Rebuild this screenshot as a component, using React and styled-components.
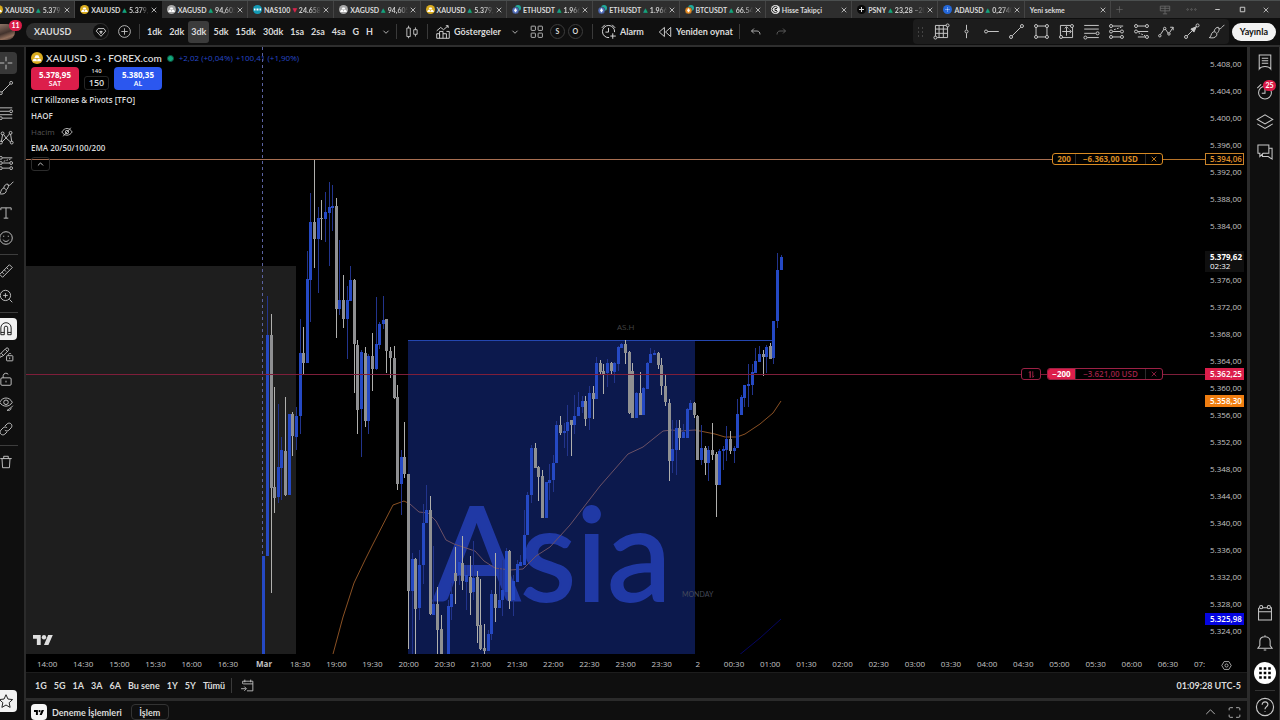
import React from "react";
import styled, { createGlobalStyle, css } from "styled-components";

const GlobalStyle = createGlobalStyle`
    * {
        box-sizing: border-box;
    }
    body {
        margin: 0;
        background: #0f0f0f;
        color: #dbdbdb;
        font-family: Lato, "Open Sans", sans-serif;
        font-size: 9px;
        overflow: hidden;
    }
    button, input {
        font: inherit;
        color: inherit;
        background: none;
        border: none;
        padding: 0;
    }
    svg {
        display: block;
        flex: none;
    }
`

const chartFont = `"Open Sans", "Noto Sans", sans-serif`

const Page = styled.div`
    height: 100vh;
    display: flex;
    flex-direction: column;
    overflow: hidden;
`

const Spacer = styled.div`
    flex: 1;
`

const TabBar = styled.header`
    display: flex;
    height: 18px;
    background: #2e2e2e;
    border-top: 1px solid #4b4f4f;
`

const TabList = styled.nav`
    flex: 1;
    display: flex;
    min-width: 0;
    margin-left: -11px;
`

const Tab = styled.div`
    flex: 1;
    min-width: 0;
    display: flex;
    align-items: center;
    gap: 1px;
    padding: 0 3px 0 5px;
    border-right: 1px solid ${props => props.$active ? "#0f0f0f" : "#444"};
    background: ${props => props.$active ? "#0f0f0f" : "transparent"};
`

const TabLink = styled.a`
    display: flex;
    align-items: center;
    gap: 2px;
    flex: 1;
    min-width: 0;
    white-space: nowrap;
    color: #dbdbdb;
    text-decoration: none;
    font-size: 7px;
    line-height: 12px;
    font-weight: 700;
`

const TabPrice = styled.span`
    font-weight: 700;
    flex: 1;
    min-width: 0;
    overflow: hidden;
    color: #d0d0d0;
    mask-image: linear-gradient(90deg, #000 50%, transparent);
`

const Arrow = styled.span`
    color: ${props => props.$down ? "#d6244f" : "#14a37f"};
    font-size: 6px;
    font-family: "DejaVu Sans", sans-serif;
`

const IconButton = styled.button`
    display: flex;
    align-items: center;
    justify-content: center;
    color: ${props => props.$dim ? "#6a6a6a" : "#c9c9c9"};
`

const WindowControls = styled.div`
    width: 169px;
    display: flex;
    align-items: center;
    justify-content: space-between;
    padding: 0 3px 0 4px;
`

const Toolbar = styled.div`
    display: flex;
    align-items: center;
    height: 29px;
    background: #0f0f0f;
    border-bottom: 2px solid #2e2e2e;
    font-weight: 700;
    padding-right: 4px;
`

const Avatar = styled.div`
    position: relative;
    width: 15px;
    height: 16px;
    margin-right: 11px;
    border-radius: 0 8px 8px 0;
    background: linear-gradient(160deg, #8f7467, #43332d 50%, #94705d 75%, #2a2220);
`

const Count = styled.span`
    position: absolute;
    top: -4px;
    right: -7px;
    min-width: 13px;
    height: 11px;
    border-radius: 6px;
    background: #d91c48;
    color: #fff;
    font-size: 7px;
    line-height: 11px;
    font-weight: 700;
    text-align: center;
`

const SymbolSearch = styled.button`
    width: 83px;
    height: 17px;
    padding: 0 1px 0 8px;
    display: flex;
    align-items: center;
    justify-content: space-between;
    border-radius: 9px;
    background: #2e2e2e;
`

const SymbolBadge = styled.span`
    width: 15px;
    height: 15px;
    border-radius: 8px;
    background: #0f0f0f;
    display: flex;
    align-items: center;
    justify-content: center;
`

const Tool = styled(IconButton)`
    width: ${props => props.$w || 30}px;
    height: 22px;
`

const TextTool = styled.button`
    display: flex;
    align-items: center;
    gap: 3px;
    height: 22px;
    padding: 0 6px 0 7px;
    white-space: nowrap;
`

const Intervals = styled.div`
    display: flex;
    gap: 1px;
    padding-left: 4px;
`

const Interval = styled.button`
    height: 22px;
    padding: 0 3px;
    border-radius: 3px;
    background: ${props => props.$active ? "#3b3b3b" : "transparent"};
`

const Divider = styled.i`
    width: 1px;
    height: 15px;
    background: #3a3a3a;
`

const Letters = styled.div`
    display: flex;
    gap: 3px;
    padding: 0 9px 0 0;
`

const RoundLetter = styled.button`
    width: 15px;
    height: 15px;
    border: 1px solid #3d3d3d;
    border-radius: 8px;
    font-size: 7px;
    line-height: 13px;
`

const DrawBar = styled.div`
    margin-left: auto;
    display: flex;
    align-items: center;
    height: 25px;
    border-radius: 4px;
    background: #1c1c1c;
`

const Publish = styled.button`
    height: 18px;
    padding: 0 8px;
    margin-left: 3px;
    border-radius: 9px;
    background: #f2f2f2;
    color: #0f0f0f;
`

const Body = styled.div`
    flex: 1;
    display: flex;
    min-height: 0;
`

const LeftBar = styled.aside`
    width: 26px;
    overflow: hidden;
    display: flex;
    flex-direction: column;
    padding: 3px 0 7px;
    border-right: 2px solid #2b2b2b;
`

const SideTool = styled(IconButton)`
    width: 28px;
    height: 25px;
    margin-left: -8px;
    flex: none;

    span {
        width: 22px;
        height: 22px;
        border-radius: 4px;
        display: flex;
        align-items: center;
        justify-content: center;
        ${props => props.$active && css`background: #383838;`}
        ${props => props.$light && css`background: #f2f2f2; color: #111;`}
    }
`

const SideRule = styled.hr`
    width: 18px;
    height: 1px;
    flex: none;
    margin: 4px 0 3px;
    border: none;
    background: #3d3d3d;
`

const Main = styled.main`
    flex: 1;
    min-width: 0;
    display: flex;
    flex-direction: column;
`

const ChartRow = styled.section`
    flex: 1;
    min-height: 0;
    display: flex;
    background: #000;
    font-family: ${chartFont};
`

const ChartPane = styled.div`
    position: relative;
    flex: 1;
    min-width: 0;
    overflow: hidden;

    > svg {
        width: 100%;
        height: 100%;
    }
`

const Legend = styled.div`
    position: absolute;
    top: 5px;
    left: 5px;
    display: flex;
    flex-direction: column;
    align-items: flex-start;
    font-size: 8px;
    line-height: 16px;
    font-weight: 600;
`

const LegendTitle = styled.div`
    display: flex;
    align-items: center;
    gap: 3px;
    height: 12px;
    font-family: Lato, sans-serif;
    font-size: 10px;
    font-weight: 600;
    white-space: nowrap;
`

const Change = styled.span`
    color: #2748c8;
    font-family: ${chartFont};
    font-size: 8px;
    font-weight: 400;
`

const Dot = styled.i`
    width: 7px;
    height: 7px;
    margin: 0 2px 0 2px;
    border-radius: 4px;
    background: #12a87c;
    border: 1px solid #0b5541;
`

const TradeRow = styled.div`
    display: flex;
    align-items: flex-end;
    gap: 5px;
    margin: 3px 0 2px;
`

const TradeButton = styled.button`
    width: 48px;
    height: 23px;
    border-radius: 4px;
    background: ${props => props.$color};
    color: #fff;
    font-size: 8px;
    line-height: 9px;
    font-weight: 700;

    small {
        display: block;
        font-size: 7px;
        font-weight: 600;
    }
`

const Spread = styled.div`
    width: 25px;
    text-align: center;
    font-size: 6px;
    line-height: 9px;
`

const Quantity = styled.button`
    width: 25px;
    height: 14px;
    display: block;
    border: 1px solid #262626;
    border-radius: 3px;
    font-size: 9px;
    line-height: 12px;
`

const Hidden = styled.span`
    display: flex;
    align-items: center;
    gap: 6px;
    color: #555;
    font-weight: 400;

    svg {
        color: #c9c9c9;
    }
`

const Collapse = styled(IconButton)`
    width: 19px;
    height: 14px;
    margin-top: 1px;
    border: 1px solid #2c2c2c;
    border-radius: 3px;
`

const Order = styled.div`
    position: absolute;
    right: 42px;
    top: ${props => props.$top}px;
    height: 12px;
    display: flex;
    color: ${props => props.$color};
    font-size: 8px;
    line-height: 10px;
    white-space: nowrap;
`

const Chip = styled.div`
    display: flex;
    background: #000;
    border: 1px solid currentColor;
    border-radius: 3px;
    overflow: hidden;
    margin-left: 6px;
`

const ChipPart = styled.span`
    width: ${props => props.$w}px;
    text-align: center;
    font-weight: ${props => props.$bold ? 700 : 600};
    border-right: 1px solid #2b2b2b;
    ${props => props.$fill && css`background: ${props.$fill}; color: #fff;`}
`

const ChipButton = styled(IconButton)`
    width: ${props => props.$w || 16}px;
    color: inherit;
`

const PriceAxis = styled.div`
    position: relative;
    width: 42px;
    padding-top: 3px;
    overflow: hidden;
    font-size: 8px;
    color: #c4c4c4;
`

const PriceTick = styled.div`
    height: 27px;
    padding-left: 5px;
    line-height: 27px;
`

const PriceTag = styled.div`
    position: absolute;
    left: 0;
    top: ${props => props.$top}px;
    width: 39px;
    padding: ${props => props.$border ? "0 0 0 4px" : "1px 0 2px 5px"};
    line-height: ${props => props.$border ? 10 : 9}px;
    background: ${props => props.$bg};
    color: ${props => props.$color || "#fff"};
    border: ${props => props.$border ? `1px solid ${props.$border}` : "none"};
    font-weight: ${props => props.$bold ? 700 : 600};

    small {
        display: block;
        font-size: 8px;
        font-weight: 400;
    }
`

const TimeAxis = styled.div`
    display: flex;
    height: 18px;
    background: #000;
    font-family: ${chartFont};
    font-size: 8px;
    line-height: 19px;
    color: #c4c4c4;
`

const TimeClip = styled.div`
    flex: 1;
    min-width: 0;
    overflow: hidden;
`

const TimeLabels = styled.div`
    display: flex;
    margin: 0 -17px 0 3px;
`

const TimeLabel = styled.span`
    flex: 1;
    min-width: 0;
    text-align: center;
    font-weight: ${props => props.$bold ? 700 : 400};
`

const RangeBar = styled.div`
    display: flex;
    align-items: center;
    height: 26px;
    padding: 0 6px;
    background: #0f0f0f;
    border-top: 1px solid #1d1d1d;
    font-weight: 700;
`

const Ranges = styled.div`
    display: flex;
    gap: 1px;
    padding-right: 3px;
`

const Range = styled.button`
    padding: 0 3px;
    height: 18px;
`

const Clock = styled.button`
    margin-left: auto;
`

const BottomPanel = styled.footer`
    display: flex;
    align-items: center;
    height: 22px;
    padding: 3px 5px 0;
    background: #0f0f0f;
    border-top: 3px solid #2b2b2b;
    font-weight: 700;
`

const BrokerIcon = styled.span`
    width: 16px;
    height: 16px;
    margin-right: 5px;
    border-radius: 4px;
    background: #f5f5f5;
    color: #000;
    display: flex;
    align-items: center;
    justify-content: center;
`

const PanelTab = styled.button`
    height: 16px;
    ${props => props.$boxed && css`
        width: 38px;
        margin-left: 9px;
        border: 1px solid #333;
        border-radius: 4px;
    `}
`

const PanelActions = styled.div`
    margin-left: auto;
    display: flex;
    gap: 9px;
`

const RightBar = styled.aside`
    width: 33px;
    display: flex;
    flex-direction: column;
    align-items: center;
    border-left: 3px solid #2b2b2b;
    border-right: 1px solid #333;

    hr {
        width: 20px;
        margin: 2px 0 3px;
        border: none;
        border-top: 1px solid #333;
    }
`

const RightTool = styled(IconButton)`
    position: relative;
    width: 29px;
    height: ${props => props.$h || 30}px;
    flex: none;

    ${Count} {
        top: 3px;
        right: 3px;
    }
`

const AppsButton = styled.span`
    width: 22px;
    height: 22px;
    border-radius: 11px;
    background: #fff;
    color: #000;
    display: flex;
    align-items: center;
    justify-content: center;
`

// All line icons are drawn on a 28 unit grid
const icons = {
    cross: <path d="M14 3v8M14 17v8M3 14h8M17 14h8" />,
    trend: <><path d="M7 21 21 7" /><circle cx="5" cy="23" r="2.5" /><circle cx="23" cy="5" r="2.5" /></>,
    fib: <><path d="M3 5h22M3 11h17M3 17h22M8 23h17" /><circle cx="23" cy="11" r="2.5" /><circle cx="5" cy="23" r="2.5" /></>,
    pattern: <><path d="M6 20 8 8M10 8l4 6 6-7M22 7l2 13M22 21l-8-7-7 7" /><circle cx="8" cy="6" r="2.5" /><circle cx="22" cy="5" r="2.5" /><circle cx="5" cy="22" r="2.5" /><circle cx="24" cy="22" r="2.5" /></>,
    position: <><path d="M8 5h17M8 14h12M8 23h12" /><path d="m10 11 12-4" strokeDasharray="3 2" /><circle cx="5" cy="5" r="2.5" /><circle cx="5" cy="14" r="2.5" /><circle cx="23" cy="14" r="2.5" /><circle cx="5" cy="23" r="2.5" /><circle cx="23" cy="23" r="2.5" /></>,
    shortPosition: <><path d="M8 5h12M8 14h17M8 23h12" /><path d="m9 16 11 5" strokeDasharray="3 2" /><circle cx="5" cy="5" r="2.5" /><circle cx="23" cy="5" r="2.5" /><circle cx="5" cy="14" r="2.5" /><circle cx="23" cy="23" r="2.5" /></>,
    brush: <><path d="M2 24c4-1 2-6 6-9 4-2 8 2 6 6-2 4-8 4-12 3z" /><path d="M10 14c1-5 4-7 7-7 2 2 2 6-2 10M17 8c2 4 5 0 10-5" /></>,
    text: <path d="M5 9V5h18v4M14 5v18M10 23h8" />,
    smile: <><circle cx="14" cy="14" r="11" /><path d="M9 17c2 4 8 4 10 0M10 10v2M18 10v2" /></>,
    ruler: <path d="m3 20 17-17 5 5L8 25zM7 16l3 3M11 12l3 3M15 8l3 3" />,
    zoom: <><circle cx="13" cy="13" r="9" /><path d="m20 20 5 5M9 13h8M13 9v8" /></>,
    magnet: <><path d="M5 24V12a9 9 0 0 1 18 0v12h-6V12a3 3 0 0 0-6 0v12z" /><path d="M5 20h6M17 20h6" /></>,
    pencilLock: <><path d="m3 15 11-11c3-2 6 1 4 4L9 17l-6 3zM6 13l4 4M13 6l4 4" /><rect x="15" y="17" width="11" height="9" rx="1" /><path d="M18 17v-2a3 3 0 0 1 5-1M20.500 20v3" /></>,
    lock: <><rect x="5" y="12" width="18" height="13" rx="2" /><path d="M9 12V8a5 5 0 0 1 9-2M14 17v3" /></>,
    eye: <><path d="M3 11c5-10 17-10 22 0-5 9-17 9-22 0z" /><circle cx="14" cy="11" r="4" /><path d="M16 25c3 0 3-4 6-4 2 2-1 5-6 4zM22 21l4-4" /></>,
    link: <path d="m12 9 4-4c5-4 11 2 7 7l-4 4c-2 2-5 2-7 0M16 19l-4 4c-5 4-11-2-7-7l4-4c2-2 5-2 7 0" />,
    trash: <path d="M4 8h20M10 8V4h8v4M7 8l1 16h12l1-16" />,
    star: <path d="m14 3 3.400 7.600 8.100.9-6 5.500 1.700 8.200L14 21l-7.200 4.200L8.500 17l-6-5.500 8.100-.9z" />,
    diamond: <path d="M7 6h14l4 6-11 12L3 12zM14 11v4M14 18l-3-5h6z" />,
    plus: <><circle cx="14" cy="14" r="11" /><path d="M14 8v12M8 14h12" /></>,
    chevron: <path d="m8 11 6 6 6-6" />,
    chevronUp: <path d="m6 17 8-8 8 8" />,
    candles: <path d="M5 7h6v15H5zM8 3v4M8 22v3M17 10h6v8h-6zM20 6v4M20 18v4" />,
    indicators: <path d="M3 25v-8h5v8M8 21v-8h6v12M14 17h6v8M20 13h5v12H3M3 12l7-6 5 4 8-7M19 3h4v4" />,
    layout: <><rect x="4" y="4" width="8" height="8" rx="1" /><rect x="17" y="4" width="8" height="8" rx="1" /><rect x="4" y="17" width="8" height="8" rx="1" /><rect x="17" y="17" width="8" height="8" rx="1" /></>,
    alarm: <><path d="M24 15a10 10 0 1 0-9 9M14 8v7H9M21 17v9M17 21.500h9M3 8l5-5M20 3l5 5" /></>,
    clock: <><circle cx="14" cy="15" r="10" /><path d="M14 8v8H9M2 8l6-6" /></>,
    replay: <path d="m13 6-9 8 9 8zM24 6l-9 8 9 8z" />,
    undo: <path d="m10 7-5 5 5 5M5 12h11c4 0 6 3 6 7" />,
    redo: <path d="m18 7 5 5-5 5M23 12H12c-4 0-6 3-6 7" />,
    grip: <path d="M9 5v2M9 13v2M9 21v2M17 5v2M17 13v2M17 21v2" />,
    gann: <><path d="M22 4H4v18M7 24h17V6M4 10h20M4 17h20M10 4v20M17 4v20" /><circle cx="24" cy="4" r="2.500" /><circle cx="4" cy="24" r="2.500" /></>,
    vertical: <><path d="M14 3v8M14 17v8" /><circle cx="14" cy="14" r="2.500" /></>,
    horizontal: <><path d="M8 14h18" /><circle cx="5" cy="14" r="2.500" /></>,
    rect: <><path d="M5 7v14M23 7v14M7 5h14M7 23h14" /><circle cx="5" cy="5" r="2.500" /><circle cx="23" cy="5" r="2.500" /><circle cx="5" cy="23" r="2.500" /><circle cx="23" cy="23" r="2.500" /></>,
    range: <><path d="M20 4H4v17M7 24h17V7M14 7v14M7 14h14M11 9l3-3 3 3M19 11l3 3-3 3" /><circle cx="23" cy="5" r="2.500" /><circle cx="5" cy="23" r="2.500" /></>,
    lines: <><path d="M2 4h24M2 10h24M2 17h19M7 24h19" /><circle cx="24" cy="17" r="2.500" /><circle cx="4" cy="24" r="2.500" /></>,
    path: <><path d="m4 19 6-9M12 10l5 7M19 16l6-9M20 7h5v5" /><circle cx="3" cy="21" r="2" /><circle cx="11" cy="9" r="2" /><circle cx="18" cy="18" r="2" /></>,
    arrow: <><path d="m7 21 9-9M21 7l1-1" /><circle cx="5" cy="23" r="2.500" /><circle cx="24" cy="4" r="2.500" /><path d="m22 6-9 4 5 5z" fill="currentColor" /></>,
    watchlist: <path d="M5 3h18v22c-2-3-4-4-9-4s-7 1-9 4zM9 8h10M9 12h10M9 16h10" />,
    layers: <path d="m2 10 12-7 12 7-12 7zM2 17l12 7 12-7" />,
    chat: <path d="M3 3h17v13h-9l-5 5v-5H3zM20 8h5v17l-6-4h-9v-4" />,
    calendar: <><path d="M4 6v19h20V6h-1M11 6h6M4 12h20" /><circle cx="8" cy="5" r="2.500" /><circle cx="20" cy="5" r="2.500" /></>,
    bell: <path d="M3 22h22l-3-4V11c0-9-16-9-16 0v7zM12 25h4M14 2v2" />,
    help: <><circle cx="14" cy="14" r="12" /><path d="M10 11c0-6 9-5 8 0-1 3-4 3-4 6M14 20v1" /></>,
    goto: <path d="M5 11V6h19v18H13M9 3v5M20 3v5M6 11h18M2 20h9M8 16l4 4-4 4" />,
    fullscreen: <path d="M4 10V7q0-2 2-2h5M17 5h5q2 0 2 2v3M4 18v3q0 2 2 2h5M17 23h5q2 0 2-2v-3" />,
    settings: <><path d="M8 4h12l6 10-6 10H8L2 14z" /><circle cx="14" cy="14" r="4" /></>,
    hidden: <><path d="M2 14c6-11 18-11 24 0-6 10-18 10-24 0zM5 24 23 4" /><circle cx="14" cy="14" r="4" /></>,
    close: <path d="m6 6 16 16M22 6 6 22" />,
    small: <path d="M5 14h18" />,
    maximize: <path d="M5 5h18v18H5z" />,
    add: <path d="M14 4v20M4 14h20" />,
    screens: <path d="M3 5h22v11H3zM14 5v18M9 23h10M3 10h22" />,
    dots: <><circle cx="4" cy="14" r="2" /><circle cx="14" cy="14" r="2" /><circle cx="24" cy="14" r="2" /></>,
    swap: <path d="M10 24V5M6 9l4-5v20M18 4v19l4-5" />,
    apps: <path d="M5 5h4v4H5zM12 5h4v4h-4zM19 5h4v4h-4zM5 12h4v4H5zM12 12h4v4h-4zM19 12h4v4h-4zM5 19h4v4H5zM12 19h4v4h-4zM19 19h4v4h-4z" fill="currentColor" stroke="none" />
}

const Icon = ({ name, size = 16, weight = 1.6 }) => (
    <svg width={size} height={size} viewBox="0 0 28 28" fill="none" stroke="currentColor" strokeWidth={weight} aria-hidden="true">
        {icons[name]}
    </svg>
)

const TVLogo = ({ width }) => (
    <svg width={width} viewBox="0 4 36 18" fill="currentColor" aria-hidden="true">
        <path d="M14 22H7V11H0V4h14zM28 22h-8l7.500-18H36z" />
        <circle cx="20" cy="8" r="4" />
    </svg>
)

const coinColors = {
    gold: "#d9ab1e", silver: "#a7a7a7", nas: "#139ab5", eth: "#5370bd", btc: "#e98d23",
    hisse: "#e6e6e6", psny: "#080808", ada: "#2467d8"
}

const Coin = ({ kind, size = 9 }) => (
    <svg width={size} height={size} viewBox="0 0 18 18" aria-hidden="true">
        {(kind === "eth" || kind === "btc") ? (
            <>
                <circle cx="12" cy="6" r="6" fill="#20a99b" />
                <circle cx="7" cy="11" r="7" fill={coinColors[kind]} stroke="#2e2e2e" />
                <path d="m7 6 3 5-3 4-3-4z" fill="#fff" />
            </>
        ) : (
            <>
                <circle cx="9" cy="9" r="9" fill={coinColors[kind]} />
                {(kind === "gold" || kind === "silver") && <path d="M7 5h4l2 4H5zM4 10h4l1 4H2zM10 10h4l2 4H9z" fill="#fff" />}
                {kind === "nas" && <path d="M3 7v4M6 7v4M9 7v4M12 7v4M15 7v4" stroke="#fff" strokeWidth="2" />}
                {kind === "hisse" && <path d="M13 5a6 6 0 1 0 0 8M12 7H8v4h4" stroke="#222" strokeWidth="2" fill="none" />}
                {kind === "psny" && <path d="M9 4v10M4 9h10" stroke="#ddd" strokeWidth="2" />}
                {kind === "ada" && <path d="M9 5v8M5 9h8" stroke="#bcd3ff" strokeWidth="2" strokeDasharray="2 1" />}
            </>
        )}
    </svg>
)

const tabs = [
    { kind: "gold", name: "XAUUSD", price: "5.379,5" },
    { kind: "gold", name: "XAUUSD", price: "5.379,6", active: true },
    { kind: "silver", name: "XAGUSD", price: "94,605" },
    { kind: "nas", name: "NAS100", price: "24.658", down: true },
    { kind: "silver", name: "XAGUSD", price: "94,605" },
    { kind: "gold", name: "XAUUSD", price: "5.379,6" },
    { kind: "eth", name: "ETHUSDT", price: "1.966" },
    { kind: "eth", name: "ETHUSDT", price: "1.966" },
    { kind: "btc", name: "BTCUSDT", price: "66.54" },
    { kind: "hisse", name: "Hisse Takipçi" },
    { kind: "psny", name: "PSNY", price: "23,28 −20" },
    { kind: "ada", name: "ADAUSD", price: "0,2740" },
    { name: "Yeni sekme" }
]

const intervals = ["1dk", "2dk", "3dk", "5dk", "15dk", "30dk", "1sa", "2sa", "4sa", "G", "H"]

const drawTools = ["gann", "vertical", "horizontal", "trend", "rect", "range", "lines", "position", "shortPosition", "path", "arrow", "brush"]

const sideTools = [
    ["cross", "trend", "fib", "pattern", "position", "brush", "text", "smile"],
    ["ruler", "zoom"],
    ["magnet", "pencilLock", "lock", "eye", "link"],
    ["trash"]
]

const times = [
    "14:00", "14:30", "15:00", "15:30", "16:00", "16:30", "Mar", "18:30", "19:00", "19:30", "20:00",
    "20:30", "21:00", "21:30", "22:00", "22:30", "23:00", "23:30", "2", "00:30", "01:00", "01:30",
    "02:00", "02:30", "03:00", "03:30", "04:00", "04:30", "05:00", "05:30", "06:00", "06:30", "07:00"
]

const ranges = ["1G", "5G", "1A", "3A", "6A", "Bu sene", "1Y", "5Y", "Tümü"]

const prices = Array.from({ length: 22 }, (_, i) => 5408 - i * 4)

// the tick that the last price tag covers
const coveredTick = 5380

const formatPrice = price => `${Math.floor(price / 1000)}.${price % 1000},00`

// up (1) or down (0), high, body top, body bottom, low
const candles = [
    [1,556,556,660,660],[1,296,335,556,556],[0,314,335,488,593],[0,387,487,498,513],[1,404,467,497,503],
    [1,437,450,468,500],[0,397,451,495,496],[1,414,414,495,495],[0,412,414,436,456],[1,407,416,437,450],
    [1,319,353,416,434],[0,327,353,363,374],[1,251,279,363,363],[1,193,222,280,322],[0,160,222,239,268],
    [1,207,218,239,293],[0,200,218,219,240],[1,192,212,219,242],[1,182,207,213,266],[1,185,206,208,231],
    [0,198,206,309,338],[1,240,300,309,315],[0,275,300,319,328],[1,286,300,319,359],[1,266,280,301,301],
    [0,279,280,344,393],[0,340,345,410,434],[1,350,352,409,457],[0,347,353,421,427],[1,354,356,421,434],
    [0,333,356,369,391],[1,297,344,369,370],[1,322,324,345,349],[1,296,320,324,329],[0,319,319,351,373],
    [0,347,351,358,378],[0,346,358,398,399],[0,385,397,484,490],[1,450,457,484,515],[0,422,457,474,478],
    [0,474,474,591,649],[1,553,559,591,660],[0,558,559,609,660],[1,550,565,608,620],[1,504,523,565,584],
    [1,485,510,523,523],[0,496,510,614,615],[1,546,604,615,615],[0,587,604,630,660],[0,615,629,660,660],
    [1,660,660,662,662],[1,600,606,660,660],[1,583,594,607,620],[0,547,573,581,604],[1,560,562,575,585],
    [0,536,563,581,590],[1,565,575,582,610],[0,556,577,593,615],[1,541,578,592,600],[0,571,577,626,643],
    [0,579,625,649,650],[0,624,648,651,660],[1,630,634,651,651],[1,590,594,634,640],[0,553,594,608,622],
    [1,568,600,608,608],[1,560,590,600,616],[1,548,551,592,592],[0,550,551,601,609],[1,575,581,600,616],
    [1,560,564,582,582],[1,555,562,566,566],[1,510,535,565,565],[1,492,495,535,535],[1,445,448,495,503],
    [0,443,448,468,468],[0,466,467,477,501],[0,470,476,518,518],[1,482,482,518,518],[1,464,480,483,500],
    [1,455,463,480,492],[1,421,425,463,463],[0,416,425,433,435],[1,423,431,433,448],[1,405,422,431,456],
    [0,420,420,425,456],[1,395,416,425,434],[1,392,407,416,416],[1,396,401,407,413],[0,396,401,419,426],
    [1,386,393,418,430],[0,386,393,399,419],[1,357,363,399,399],[0,360,363,372,374],[0,364,371,374,394],
    [1,359,363,373,387],[0,362,363,371,375],[1,362,363,372,383],[1,346,347,364,371],[1,343,344,348,348],
    [0,340,344,353,364],[0,351,352,413,414],[0,363,371,418,418],[1,392,393,418,418],[0,372,393,415,415],
    [1,387,388,415,415],[1,362,363,389,389],[1,348,354,363,363],[1,350,353,355,355],[0,352,353,365,369],
    [0,358,365,386,395],[0,374,386,402,406],[0,399,403,461,481],[1,420,449,461,473],[1,420,428,450,475],
    [0,420,428,438,450],[1,424,432,438,438],[1,408,409,438,438],[1,400,403,410,410],[0,402,403,415,418],
    [0,415,416,460,460],[1,425,448,460,465],[0,446,448,463,475],[1,446,450,463,481],[0,423,450,455,460],
    [0,452,454,485,517],[1,449,451,485,485],[1,446,449,451,470],[1,426,439,450,461],[0,431,439,451,454],
    [1,446,448,451,463],[1,399,414,448,448],[1,395,397,415,415],[1,385,385,398,407],[1,364,384,386,407],
    [1,364,372,385,395],[1,348,361,373,373],[1,346,354,362,362],[0,350,354,357,376],[1,345,347,357,373],
    [0,343,346,359,359],[1,321,321,358,364],[1,253,270,321,328],[1,255,257,270,270]
]

const ema = "333,654 343,617 354,583 365,560 372,546 393,505 404,501 410,504 419,512 428,513 436,521 446,540 454,544 475,551 484,561 495,568 510,570 523,569 536,556 550,547 570,525 600,486 628,454 643,447 663,431 672,430 680,431 695,430 715,434 725,437 737,437 745,434 760,424 773,413 781,401"

const Chart = () => (
    <svg role="img" aria-label="XAUUSD">
        <g transform="translate(-26 -47)">
            <rect x="26" y="266" width="270" height="400" fill="#1e1e1e" />
            <text x="433" y="601" fontFamily="Lato, sans-serif" fontSize="129" fill="#1e2e7f" stroke="#1e2e7f" strokeWidth="2">Asia</text>
            <polyline points={ema} fill="none" stroke="#8a5124" />
            <rect x="408" y="340" width="287" height="330" fill="rgb(41, 82, 255)" fillOpacity="0.3" />
            <path d="M408 340.500H772" stroke="#2446b0" />
            <path d="M262.500 47V660" stroke="#5a62a0" strokeDasharray="3 3" />
            {candles.map(([up, high, top, bottom, low], i) => {
                const x = Math.floor(263.9 + i * 3.617)
                return (
                    <g key={i} fill={up ? "#2549c4" : "#8f9092"}>
                        <rect x={x} y={high} width="1" height={low - high} fill={up ? "#22348c" : "#b0b0ae"} />
                        <rect x={x - 1} y={top} width="3" height={Math.max(bottom - top, 1)} />
                    </g>
                )
            })}
            <path d="M26 159.500H1052" stroke="#a86f52" />
            <path d="M1052 159.500H1205" stroke="#b87429" />
            <path d="M26 374.500H1205" stroke="#7e1e3a" />
            <path d="m738 656 22-18 21-19" stroke="#050560" fill="none" />
            <text x="617" y="330" fontSize="8" fill="#454545">AS.H</text>
            <text x="682" y="597" fontFamily="Lato, sans-serif" fontSize="7" fill="#454a5a">MONDAY</text>
            <g transform="translate(33 635) scale(0.55)" fill="#dedede">
                <path d="M14 18H7V7H0V0h14zM28 18h-8L27.500 0H36z" />
                <circle cx="20" cy="4" r="4" />
            </g>
        </g>
    </svg>
)

const Tabs = () => (
    <TabBar>
        <TabList>
            {tabs.map((tab, i) => (
                <Tab key={i} $active={tab.active}>
                    <TabLink href="#">
                        {tab.kind && <Coin kind={tab.kind} />}
                        <span>{tab.name}</span>
                        {tab.price && <Arrow $down={tab.down}>{tab.down ? "▼" : "▲"}</Arrow>}
                        {tab.price && <TabPrice>{tab.price}</TabPrice>}
                    </TabLink>
                    <IconButton aria-label="Kapat"><Icon name="close" size={8} weight={3} /></IconButton>
                </Tab>
            ))}
        </TabList>
        <WindowControls>
            <IconButton $dim aria-label="Yeni sekme"><Icon name="add" size={9} weight={2} /></IconButton>
            <Spacer />
            <Tool $w={26} $dim aria-label="Ekranlar"><Icon name="screens" size={12} weight={2} /></Tool>
            <Tool $w={27} $dim aria-label="Menü"><Icon name="dots" size={11} weight={2} /></Tool>
            <Tool $w={24} aria-label="Küçült"><Icon name="small" size={7} weight={4} /></Tool>
            <Tool $w={26} aria-label="Büyüt"><Icon name="maximize" size={7} weight={4} /></Tool>
            <Tool $w={22} aria-label="Pencereyi kapat"><Icon name="close" size={8} weight={3} /></Tool>
        </WindowControls>
    </TabBar>
)

const TopToolbar = () => (
    <Toolbar>
        <Avatar><Count>11</Count></Avatar>
        <SymbolSearch>
            XAUUSD
            <SymbolBadge><Icon name="diamond" size={12} weight={2} /></SymbolBadge>
        </SymbolSearch>
        <Tool aria-label="Karşılaştır"><Icon name="plus" size={15} /></Tool>
        <Divider />
        <Intervals>
            {intervals.map(item => <Interval key={item} $active={item === "3dk"}>{item}</Interval>)}
        </Intervals>
        <Tool $w={20} aria-label="Aralıklar"><Icon name="chevron" size={12} weight={2} /></Tool>
        <Divider />
        <Tool aria-label="Mumlar"><Icon name="candles" /></Tool>
        <Divider />
        <TextTool><Icon name="indicators" />Göstergeler</TextTool>
        <Tool $w={16} aria-label="Şablonlar"><Icon name="chevron" size={12} weight={2} /></Tool>
        <Tool $w={27} aria-label="Düzen"><Icon name="layout" size={15} /></Tool>
        <Letters>
            <RoundLetter>S</RoundLetter>
            <RoundLetter>O</RoundLetter>
        </Letters>
        <Divider />
        <TextTool><Icon name="alarm" size={17} />Alarm</TextTool>
        <TextTool><Icon name="replay" />Yeniden oynat</TextTool>
        <Divider />
        <Tool $w={32} aria-label="Geri al"><Icon name="undo" size={14} /></Tool>
        <Tool $w={18} $dim aria-label="Yinele"><Icon name="redo" size={14} /></Tool>
        <DrawBar>
            <Tool $w={16} $dim as="span"><Icon name="grip" size={14} weight={2} /></Tool>
            {drawTools.map(name => <Tool key={name} $w={25} aria-label={name}><Icon name={name} size={17} /></Tool>)}
        </DrawBar>
        <Publish>Yayınla</Publish>
    </Toolbar>
)

const ChartLegend = () => (
    <Legend>
        <LegendTitle>
            <Coin kind="gold" size={12} />
            <span>XAUUSD · 3 · FOREX.com</span>
            <Dot />
            <Change>+2,02 (+0,04%)</Change>
            <Change>+100,41 (+1,90%)</Change>
        </LegendTitle>
        <TradeRow>
            <TradeButton $color="#dc1e4b">5.378,95<small>SAT</small></TradeButton>
            <Spread>140<Quantity>150</Quantity></Spread>
            <TradeButton $color="#2b57ef">5.380,35<small>AL</small></TradeButton>
        </TradeRow>
        <span>ICT Killzones & Pivots [TFO]</span>
        <span>HAOF</span>
        <Hidden>Hacim <Icon name="hidden" size={12} weight={2} /></Hidden>
        <span>EMA 20/50/100/200</span>
        <Collapse aria-label="Daralt"><Icon name="chevronUp" size={9} weight={3} /></Collapse>
    </Legend>
)

const App = () => (
    <Page>
        <GlobalStyle />
        <Tabs />
        <TopToolbar />
        <Body>
            <LeftBar>
                {sideTools.map((group, i) => (
                    <React.Fragment key={i}>
                        {i > 0 && <SideRule />}
                        {group.map(name => (
                            <SideTool key={name} aria-label={name} $active={name === "cross"} $light={name === "magnet"}>
                                <span><Icon name={name} /></span>
                            </SideTool>
                        ))}
                    </React.Fragment>
                ))}
                <Spacer />
                <SideTool $light aria-label="Favoriler"><span><Icon name="star" /></span></SideTool>
            </LeftBar>
            <Main>
                <ChartRow>
                    <ChartPane>
                        <Chart />
                        <ChartLegend />
                        <Order $top={106} $color="#d98b23">
                            <Chip>
                                <ChipPart $w={23} $bold>200</ChipPart>
                                <ChipPart $w={70} $bold>−6.363,00 USD</ChipPart>
                                <ChipButton aria-label="Emri kapat"><Icon name="close" size={8} weight={3} /></ChipButton>
                            </Chip>
                        </Order>
                        <Order $top={321} $color="#9c2145">
                            <Chip><ChipButton $w={18} aria-label="Ters çevir"><Icon name="swap" size={9} weight={3} /></ChipButton></Chip>
                            <Chip>
                                <ChipPart $w={28} $bold $fill="#dc1e4b">−200</ChipPart>
                                <ChipPart $w={70}>−3.621,00 USD</ChipPart>
                                <ChipButton aria-label="Pozisyonu kapat"><Icon name="close" size={8} weight={3} /></ChipButton>
                            </Chip>
                        </Order>
                    </ChartPane>
                    <PriceAxis>
                        {prices.map(price => (
                            <PriceTick key={price}>{price !== coveredTick && formatPrice(price)}</PriceTick>
                        ))}
                        <PriceTag $top={106} $bg="#000" $border="#c9832a" $color="#e0912a">5.394,06</PriceTag>
                        <PriceTag $top={204} $bg="#0f0f0f" $bold>5.379,62<small>02:32</small></PriceTag>
                        <PriceTag $top={321} $bg="#dc1e4b">5.362,25</PriceTag>
                        <PriceTag $top={348} $bg="#ef7d10">5.358,30</PriceTag>
                        <PriceTag $top={566} $bg="#0505e0">5.325,98</PriceTag>
                    </PriceAxis>
                </ChartRow>
                <TimeAxis>
                    <TimeClip>
                        <TimeLabels>
                            {times.map(time => <TimeLabel key={time} $bold={time === "Mar"}>{time}</TimeLabel>)}
                        </TimeLabels>
                    </TimeClip>
                    <Tool $w={42} aria-label="Ayarlar"><Icon name="settings" size={11} weight={2} /></Tool>
                </TimeAxis>
                <RangeBar>
                    <Ranges>
                        {ranges.map(range => <Range key={range}>{range}</Range>)}
                    </Ranges>
                    <Divider />
                    <Tool aria-label="Tarihe git"><Icon name="goto" size={15} /></Tool>
                    <Clock>01:09:28 UTC-5</Clock>
                </RangeBar>
                <BottomPanel>
                    <BrokerIcon><TVLogo width={10} /></BrokerIcon>
                    <PanelTab>Deneme İşlemleri</PanelTab>
                    <PanelTab $boxed>İşlem</PanelTab>
                    <PanelActions>
                        <IconButton aria-label="Paneli aç"><Icon name="chevronUp" size={15} /></IconButton>
                        <IconButton aria-label="Tam ekran"><Icon name="fullscreen" size={15} /></IconButton>
                    </PanelActions>
                </BottomPanel>
            </Main>
            <RightBar>
                <RightTool aria-label="İzleme listesi"><Icon name="watchlist" size={18} /></RightTool>
                <RightTool aria-label="Alarmlar"><Icon name="clock" size={18} /><Count>25</Count></RightTool>
                <RightTool aria-label="Katmanlar"><Icon name="layers" size={18} /></RightTool>
                <RightTool aria-label="Sohbet"><Icon name="chat" size={18} /></RightTool>
                <Spacer />
                <RightTool aria-label="Takvim"><Icon name="calendar" size={18} /></RightTool>
                <RightTool aria-label="Bildirimler"><Icon name="bell" size={18} /></RightTool>
                <RightTool aria-label="Ürünler"><AppsButton><Icon name="apps" size={18} /></AppsButton></RightTool>
                <hr />
                <RightTool $h={26} aria-label="Yardım"><Icon name="help" size={20} /></RightTool>
            </RightBar>
        </Body>
    </Page>
)

export default App
